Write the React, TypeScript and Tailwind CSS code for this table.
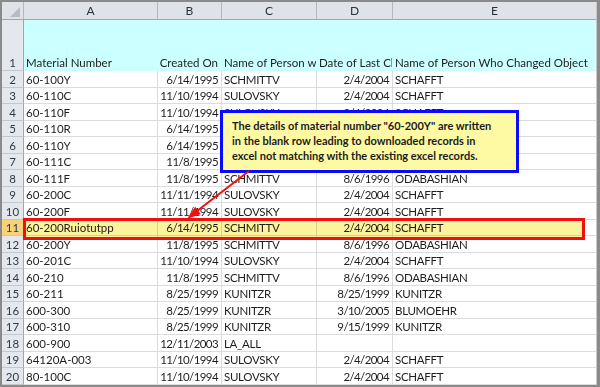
import React from "react";

type Align = "l" | "r";

const COLS: { key: string; w: string; align: Align }[] = [
  { key: "A", w: "w-[134px]", align: "l" },
  { key: "B", w: "w-[64px]", align: "r" },
  { key: "C", w: "w-[95px]", align: "l" },
  { key: "D", w: "w-[76px]", align: "r" },
  { key: "E", w: "w-[204px]", align: "l" },
];

const HEAD = [
  "Material Number",
  "Created On",
  "Name of Person who Created",
  "Date of Last Change",
  "Name of Person Who Changed Object",
];

const ROWS: string[][] = [
  ["60-100Y", "6/14/1995", "SCHMITTV", "2/4/2004", "SCHAFFT"],
  ["60-110C", "11/10/1994", "SULOVSKY", "2/4/2004", "SCHAFFT"],
  ["60-110F", "11/10/1994", "SULOVSKY", "2/4/2004", "SCHAFFT"],
  ["60-110R", "6/14/1995", "SCHMITTV", "2/4/2004", "SCHAFFT"],
  ["60-110Y", "6/14/1995", "SCHMITTV", "2/4/2004", "SCHAFFT"],
  ["60-111C", "11/8/1995", "SCHMITTV", "8/6/1996", "ODABASHIAN"],
  ["60-111F", "11/8/1995", "SCHMITTV", "8/6/1996", "ODABASHIAN"],
  ["60-200C", "11/11/1994", "SULOVSKY", "2/4/2004", "SCHAFFT"],
  ["60-200F", "11/11/1994", "SULOVSKY", "2/4/2004", "SCHAFFT"],
  ["60-200Ruiotutpp", "6/14/1995", "SCHMITTV", "2/4/2004", "SCHAFFT"],
  ["60-200Y", "11/8/1995", "SCHMITTV", "8/6/1996", "ODABASHIAN"],
  ["60-201C", "11/10/1994", "SULOVSKY", "2/4/2004", "SCHAFFT"],
  ["60-210", "11/8/1995", "SCHMITTV", "8/6/1996", "ODABASHIAN"],
  ["60-211", "8/25/1999", "KUNITZR", "8/25/1999", "KUNITZR"],
  ["600-300", "8/25/1999", "KUNITZR", "3/10/2005", "BLUMOEHR"],
  ["600-310", "8/25/1999", "KUNITZR", "9/15/1999", "KUNITZR"],
  ["600-900", "12/11/2003", "LA_ALL", "", ""],
  ["64120A-003", "11/10/1994", "SULOVSKY", "2/4/2004", "SCHAFFT"],
  ["80-100C", "11/10/1994", "SULOVSKY", "2/4/2004", "SCHAFFT"],
];

function RowHead({ n, active }: { n: number; active?: boolean }) {
  return (
    <div
      className={`w-[22px] h-full shrink-0 flex items-end justify-center pb-[1px] border-r border-b border-r-[#9ea6b0] border-b-[#c3c8cf] text-[#2f3a45] ${
        active ? "bg-[#f7d27c]" : "bg-[#e4e8ed]"
      }`}
    >
      {n}
    </div>
  );
}

function Cell({ w, align, text, head, caps }: { w: string; align: Align; text: string; head?: boolean; caps?: boolean }) {
  return (
    <div
      className={`${w} h-full shrink-0 flex items-end pb-[1px] px-[2px] overflow-hidden whitespace-nowrap border-r border-b ${
        head ? "border-[#ccffff] bg-[#ccffff]" : "border-[#dadcdd] bg-white"
      } ${align === "r" ? "justify-end pr-[3px]" : "justify-start"} ${
        !head && align === "r" ? "tracking-[-0.6px]" : ""
      } ${caps ? "tracking-[-0.3px]" : ""}`}
    >
      {text}
    </div>
  );
}

export default function App() {
  return (
    <div className="relative w-[600px] h-[387px] overflow-hidden bg-[#8a8a8a] pt-[2px] pl-[2px] pr-[3px] pb-[2px] font-[family-name:Lato,sans-serif] text-[11.5px] leading-[13px] text-[#1e1e1e]">
      <div className="w-[595px] h-full bg-white overflow-hidden border-r border-[#c9c9c9]">
        {/* column letters */}
        <div className="flex h-[18px] bg-[#dfe3e8] border-b border-[#9ea6b0]">
          <div className="w-[22px] h-full shrink-0 border-r border-[#b2b8bf] relative">
            <svg className="absolute inset-0" width="21" height="17" viewBox="0 0 21 17">
              <polygon points="18,5 18,15 8,15" fill="#b7bcc2" />
            </svg>
          </div>
          {COLS.map((c) => (
            <div
              key={c.key}
              className={`${c.w} h-full shrink-0 flex items-center justify-center border-r border-[#b2b8bf] text-[#27313c] text-[12px]`}
            >
              {c.key}
            </div>
          ))}
        </div>

        {/* header row */}
        <div className="flex h-[51px]">
          <RowHead n={1} />
          {COLS.map((c, i) => (
            <Cell key={c.key} w={c.w} align={i === 1 ? "r" : "l"} text={HEAD[i]} head />
          ))}
        </div>

        {/* data rows */}
        {ROWS.map((r, ri) => (
          <div key={ri} className="flex h-[16.5px]">
            <RowHead n={ri + 2} active={ri + 2 === 11} />
            {COLS.map((c, ci) => (
              <Cell key={c.key} w={c.w} align={c.align} text={r[ci]} caps={ci === 2 || ci === 4} />
            ))}
          </div>
        ))}
      </div>

      {/* highlighted record */}
      <div className="absolute left-[23px] top-[218px] w-[562px] h-[22px] bg-[#fcf49c] mix-blend-multiply" />
      <div className="absolute left-[23px] top-[218px] w-[562px] h-[22px] border-[3px] border-[#f01010]" />

      {/* note */}
      <div className="absolute left-[220px] top-[110px] w-[299px] h-[63px] border-[3px] border-[#0a0aff] bg-[#fdfaa3] pl-[9px] pt-[5px] font-bold text-[11px] leading-[15px] text-[#1c1c1c]">
        <div>The details of material number "60-200Y" are written</div>
        <div>in the blank row leading to downloaded records in</div>
        <div>excel not matching with the existing excel records.</div>
      </div>

      {/* pointer */}
      <svg className="absolute inset-0 pointer-events-none" width="600" height="387" viewBox="0 0 600 387">
        <line x1="249" y1="171" x2="197" y2="211" stroke="#f01010" strokeWidth="2" />
        <polygon points="187,219 200.8,213.9 195.2,206.8" fill="#f01010" />
      </svg>
    </div>
  );
}
